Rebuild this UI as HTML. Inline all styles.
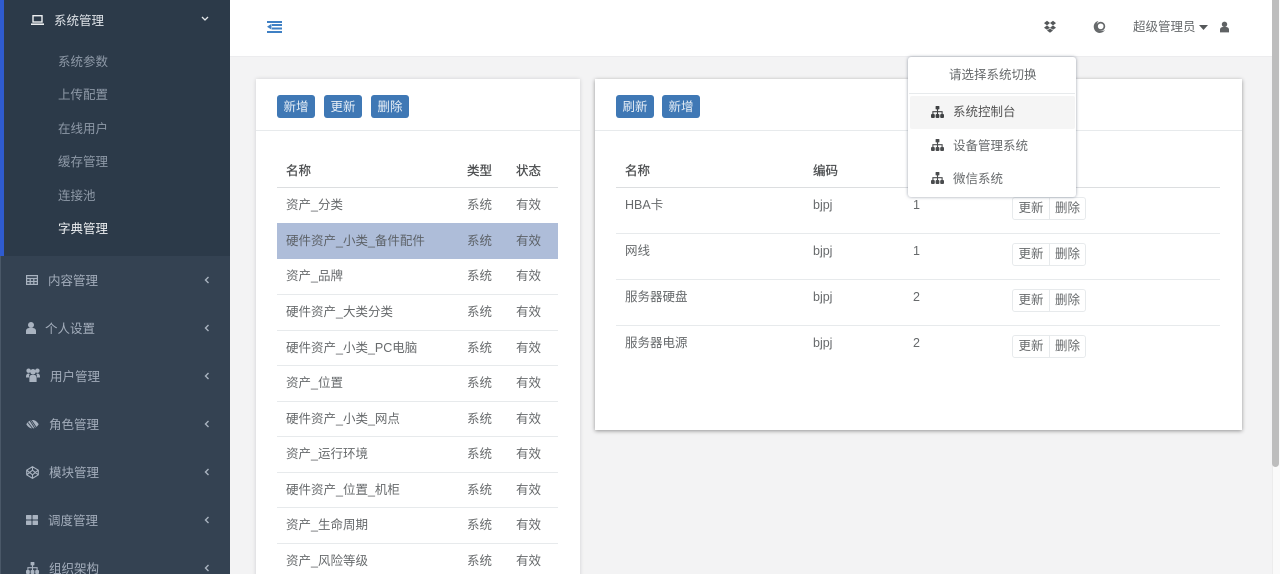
<!DOCTYPE html>
<html lang="zh"><head><meta charset="utf-8"><title>系统管理</title>
<style>
*{box-sizing:border-box}
html,body{margin:0;padding:0;width:1280px;height:574px;overflow:hidden;background:#f3f3f4}
body{position:relative;font-family:"Liberation Sans","Noto Sans CJK SC",sans-serif;font-size:12.5px;color:#676a6c}
.a{position:absolute}
.t{position:absolute;line-height:20px;height:20px;white-space:nowrap}
.ln{position:absolute;height:1px;background:#e7eaec}
.hd{color:#4a4c4e;-webkit-text-stroke:.25px #4a4c4e}
.s1{color:#a3adbb}
.s2{color:#8e99a7}
.btn{position:absolute;top:95px;height:23px;width:38px;background:#3f78b5;border-radius:3px;color:#e6eef6;text-align:center;line-height:24px}
.grp{position:absolute;left:1012px;width:74px;height:23px;border:1px solid #e7eaec;border-radius:3px;background:#fff;color:#676a6c;line-height:21px}
.grp span{position:absolute;top:0;text-align:center}
.grp .l{left:0;width:37px;border-right:1px solid #e7eaec;height:21px}
.grp .r{left:37px;width:35px}
svg{position:absolute;display:block}
.ar{position:absolute;left:204px;width:6px;height:8px}
</style></head><body>

<!-- top bar -->
<div class="a" style="left:230px;top:0;width:1042px;height:57px;background:#fff;border-bottom:1px solid #ececee"></div>

<!-- sidebar -->
<div class="a" style="left:0;top:0;width:230px;height:574px;background:#344252"></div>
<div class="a" style="left:0;top:0;width:230px;height:256px;background:#2c3a49"></div>
<div class="a" style="left:0;top:0;width:4px;height:256px;background:#2f5bcf"></div>
<div class="a" style="left:0;top:256px;width:1px;height:318px;background:#4a5868"></div>

<svg style="left:31px;top:15px" width="13" height="10" viewBox="0 0 13 10"><rect x="2" y=".7" width="9" height="6.300" fill="none" stroke="#eceef0" stroke-width="1.400"/><rect x="0" y="8.400" width="13" height="1.600" fill="#eceef0"/></svg>
<div class="t" style="left:54px;top:11px;color:#dfe3e8">系统管理</div>
<svg style="left:201px;top:16px" width="8" height="6" viewBox="0 0 8 6"><path d="M1 1l3 3 3-3" fill="none" stroke="#e4e7ea" stroke-width="1.300"/></svg>

<div class="t s2" style="left:58px;top:52px">系统参数</div>
<div class="t s2" style="left:58px;top:85px">上传配置</div>
<div class="t s2" style="left:58px;top:119px">在线用户</div>
<div class="t s2" style="left:58px;top:152px">缓存管理</div>
<div class="t s2" style="left:58px;top:186px">连接池</div>
<div class="t" style="left:58px;top:219px;color:#eef0f2">字典管理</div>

<svg style="left:26px;top:275px" width="12" height="10" viewBox="0 0 12 10"><path d="M.6.6h10.800v8.800H.6zM.6 3.500h10.800M.6 6.500h10.800M4.200 3.500v6M7.800 3.500v6" fill="none" stroke="#a9b3c0" stroke-width="1.200"/></svg>
<div class="t s1" style="left:48px;top:271px">内容管理</div>
<svg style="left:26px;top:322px" width="10" height="12" viewBox="0 0 10 12"><circle cx="5" cy="3" r="3" fill="#a9b3c0"/><path d="M0 12V9C0 7.200 1.400 6.200 3 6h4c1.600.2 3 1.200 3 3v3z" fill="#a9b3c0"/></svg>
<div class="t s1" style="left:45px;top:319px">个人设置</div>
<svg style="left:26px;top:368px" width="14" height="14" viewBox="0 0 14 14"><circle cx="2.600" cy="2.700" r="2.200" fill="#a9b3c0"/><circle cx="11.400" cy="2.700" r="2.200" fill="#a9b3c0"/><circle cx="7" cy="3.800" r="2.800" fill="#a9b3c0"/><path d="M0 9C0 6.500 1 5.500 2.600 5.500l1.200.5C3 7.200 3 8.400 3 9.500H0zM14 9c0-2.500-1-3.500-2.600-3.500l-1.200.5c.8 1.200.8 2.400.8 3.500h3zM3.400 14V9.700C3.400 8 4.500 7 5.500 7h3c1 0 2.100 1 2.100 2.700V14z" fill="#a9b3c0"/></svg>
<div class="t s1" style="left:50px;top:367px">用户管理</div>
<svg style="left:26px;top:418px" width="13" height="12" viewBox="0 0 13 12"><path d="M.3 6.200C2.300 3 4.400 2 6.500 2s4.200 1 6.200 4.200c-2 3.200-4.100 4.200-6.200 4.200S2.300 9.400.3 6.200z" fill="#a9b3c0"/><path d="M3.200 1.200l6.300 10M5.300 2l5 7.500M2 4.500l5 6.500" stroke="#344252" stroke-width=".9"/></svg>
<div class="t s1" style="left:49px;top:415px">角色管理</div>
<svg style="left:26px;top:466px" width="13" height="13" viewBox="0 0 13 13"><path d="M6.500.7l5.800 3.500v4.600l-5.800 3.500L.7 8.800V4.200zM.7 4.200l5.800 4.600 5.800-4.600M.7 8.800l5.800-4.600 5.800 4.600M6.500.7v3.500M6.500 8.800v3.500" fill="none" stroke="#a9b3c0" stroke-width="1.100"/></svg>
<div class="t s1" style="left:49px;top:463px">模块管理</div>
<svg style="left:26px;top:515px" width="12" height="10" viewBox="0 0 12 10"><rect width="5.500" height="4.500" rx=".6" fill="#a9b3c0"/><rect x="6.500" width="5.500" height="4.500" rx=".6" fill="#a9b3c0"/><rect y="5.500" width="5.500" height="4.500" rx=".6" fill="#a9b3c0"/><rect x="6.500" y="5.500" width="5.500" height="4.500" rx=".6" fill="#a9b3c0"/></svg>
<div class="t s1" style="left:48px;top:511px">调度管理</div>
<svg style="left:26px;top:562px" width="13" height="12" viewBox="0 0 13 12"><rect x="4.600" y="0" width="3.800" height="3.400" rx=".5" fill="#a9b3c0"/><rect x="0" y="8" width="3.800" height="4" rx="1" fill="#a9b3c0"/><rect x="4.600" y="8" width="3.800" height="4" rx="1" fill="#a9b3c0"/><rect x="9.200" y="8" width="3.800" height="4" rx="1" fill="#a9b3c0"/><path d="M6.500 3v5M1.900 8V5.700h9.200V8" fill="none" stroke="#a9b3c0" stroke-width="1.100"/></svg>
<div class="t s1" style="left:49px;top:559px">组织架构</div>

<svg class="ar" style="top:276px" viewBox="0 0 6 8"><path d="M4.500 1L1.500 4l3 3" fill="none" stroke="#a9b3c0" stroke-width="1.400"/></svg>
<svg class="ar" style="top:324px" viewBox="0 0 6 8"><path d="M4.500 1L1.500 4l3 3" fill="none" stroke="#a9b3c0" stroke-width="1.400"/></svg>
<svg class="ar" style="top:372px" viewBox="0 0 6 8"><path d="M4.500 1L1.500 4l3 3" fill="none" stroke="#a9b3c0" stroke-width="1.400"/></svg>
<svg class="ar" style="top:420px" viewBox="0 0 6 8"><path d="M4.500 1L1.500 4l3 3" fill="none" stroke="#a9b3c0" stroke-width="1.400"/></svg>
<svg class="ar" style="top:468px" viewBox="0 0 6 8"><path d="M4.500 1L1.500 4l3 3" fill="none" stroke="#a9b3c0" stroke-width="1.400"/></svg>
<svg class="ar" style="top:516px" viewBox="0 0 6 8"><path d="M4.500 1L1.500 4l3 3" fill="none" stroke="#a9b3c0" stroke-width="1.400"/></svg>
<svg class="ar" style="top:564px" viewBox="0 0 6 8"><path d="M4.500 1L1.500 4l3 3" fill="none" stroke="#a9b3c0" stroke-width="1.400"/></svg>

<!-- top bar icons -->
<svg style="left:267px;top:21px" width="15" height="12" viewBox="0 0 15 12"><path d="M0 0h15v2H0zM5 3h10v2H5zM5 6.500h10v2H5zM0 10h15v2H0z" fill="#3f80c4"/><path d="M4.500 2.800v5.800L0 5.700z" fill="#3f80c4"/></svg>
<svg style="left:1044px;top:20px" width="12" height="13" viewBox="0 0 12 13"><path d="M3 .8L6 3 9 .8l3 2.300-3 2.300 3 2.300-3 2.100-3-2.100-3 2.100-3-2.100 3-2.300-3-2.300zM6 3L3 5.400 6 7.700l3-2.300zM3 10.500l3-2 3 2L6 12.700z" fill="#55585a" fill-rule="evenodd"/></svg>
<svg style="left:1093px;top:20px" width="13" height="14" viewBox="0 0 13 14"><circle cx="7.700" cy="6.300" r="3.700" fill="none" stroke="#66696b" stroke-width="1.700"/><path d="M5.500 1C2.300 1.500.4 4.200.8 7.500c.4 3.300 3.200 5.800 6.600 5.400 2.300-.3 3.700-1.300 4.600-3-2.600 1.800-6 1.500-7.600-1.300C3 6 3.500 3 5.500 1z" fill="#66696b"/></svg>
<div class="t" style="left:1133px;top:17px">超级管理员</div>
<svg style="left:1199px;top:25px" width="9" height="5" viewBox="0 0 9 5"><path d="M0 0h9L4.500 5z" fill="#55585a"/></svg>
<svg style="left:1220px;top:21px" width="9" height="12" viewBox="0 0 10 12"><circle cx="5" cy="3" r="3" fill="#5f6264"/><path d="M0 12V9C0 7.200 1.400 6.200 3 6h4c1.600.2 3 1.200 3 3v3z" fill="#5f6264"/></svg>

<!-- left card -->
<div class="a" style="left:256px;top:79px;width:324px;height:500px;background:#fff;box-shadow:0 0 4px rgba(0,0,0,.14)"></div>
<div class="ln" style="left:256px;top:130px;width:324px"></div>
<div class="btn" style="left:277px">新增</div>
<div class="btn" style="left:324px">更新</div>
<div class="btn" style="left:371px">删除</div>

<div class="t hd" style="left:286px;top:161px">名称</div>
<div class="t hd" style="left:467px;top:161px">类型</div>
<div class="t hd" style="left:516px;top:161px">状态</div>
<div class="ln" style="left:277px;top:187px;width:281px;background:#dcdee0"></div>

<div class="a" style="left:277px;top:223px;width:281px;height:36px;background:#aebdd9"></div>
<div class="ln" style="left:277px;top:294px;width:281px"></div>
<div class="ln" style="left:277px;top:330px;width:281px"></div>
<div class="ln" style="left:277px;top:365px;width:281px"></div>
<div class="ln" style="left:277px;top:401px;width:281px"></div>
<div class="ln" style="left:277px;top:436px;width:281px"></div>
<div class="ln" style="left:277px;top:472px;width:281px"></div>
<div class="ln" style="left:277px;top:507px;width:281px"></div>
<div class="ln" style="left:277px;top:543px;width:281px"></div>

<div class="t" style="left:286px;top:195px">资产_分类</div><div class="t" style="left:467px;top:195px">系统</div><div class="t" style="left:516px;top:195px">有效</div>
<div class="t" style="left:286px;top:231px;color:#5d6268">硬件资产_小类_备件配件</div><div class="t" style="left:467px;top:231px;color:#5d6268">系统</div><div class="t" style="left:516px;top:231px;color:#5d6268">有效</div>
<div class="t" style="left:286px;top:266px">资产_品牌</div><div class="t" style="left:467px;top:266px">系统</div><div class="t" style="left:516px;top:266px">有效</div>
<div class="t" style="left:286px;top:302px">硬件资产_大类分类</div><div class="t" style="left:467px;top:302px">系统</div><div class="t" style="left:516px;top:302px">有效</div>
<div class="t" style="left:286px;top:338px">硬件资产_小类_PC电脑</div><div class="t" style="left:467px;top:338px">系统</div><div class="t" style="left:516px;top:338px">有效</div>
<div class="t" style="left:286px;top:373px">资产_位置</div><div class="t" style="left:467px;top:373px">系统</div><div class="t" style="left:516px;top:373px">有效</div>
<div class="t" style="left:286px;top:409px">硬件资产_小类_网点</div><div class="t" style="left:467px;top:409px">系统</div><div class="t" style="left:516px;top:409px">有效</div>
<div class="t" style="left:286px;top:444px">资产_运行环境</div><div class="t" style="left:467px;top:444px">系统</div><div class="t" style="left:516px;top:444px">有效</div>
<div class="t" style="left:286px;top:480px">硬件资产_位置_机柜</div><div class="t" style="left:467px;top:480px">系统</div><div class="t" style="left:516px;top:480px">有效</div>
<div class="t" style="left:286px;top:515px">资产_生命周期</div><div class="t" style="left:467px;top:515px">系统</div><div class="t" style="left:516px;top:515px">有效</div>
<div class="t" style="left:286px;top:551px">资产_风险等级</div><div class="t" style="left:467px;top:551px">系统</div><div class="t" style="left:516px;top:551px">有效</div>

<!-- right card -->
<div class="a" style="left:595px;top:79px;width:647px;height:351px;background:#fff;box-shadow:0 1px 4px rgba(0,0,0,.4)"></div>
<div class="ln" style="left:595px;top:130px;width:647px"></div>
<div class="btn" style="left:616px">刷新</div>
<div class="btn" style="left:662px">新增</div>

<div class="t hd" style="left:625px;top:161px">名称</div>
<div class="t hd" style="left:813px;top:161px">编码</div>
<div class="ln" style="left:616px;top:187px;width:604px;background:#dcdee0"></div>
<div class="ln" style="left:616px;top:233px;width:604px"></div>
<div class="ln" style="left:616px;top:279px;width:604px"></div>
<div class="ln" style="left:616px;top:325px;width:604px"></div>

<div class="t" style="left:625px;top:195px">HBA卡</div><div class="t" style="left:813px;top:195px">bjpj</div><div class="t" style="left:913px;top:195px">1</div>
<div class="t" style="left:625px;top:241px">网线</div><div class="t" style="left:813px;top:241px">bjpj</div><div class="t" style="left:913px;top:241px">1</div>
<div class="t" style="left:625px;top:287px">服务器硬盘</div><div class="t" style="left:813px;top:287px">bjpj</div><div class="t" style="left:913px;top:287px">2</div>
<div class="t" style="left:625px;top:333px">服务器电源</div><div class="t" style="left:813px;top:333px">bjpj</div><div class="t" style="left:913px;top:333px">2</div>

<div class="grp" style="top:197px"><span class="l">更新</span><span class="r">删除</span></div>
<div class="grp" style="top:243px"><span class="l">更新</span><span class="r">删除</span></div>
<div class="grp" style="top:289px"><span class="l">更新</span><span class="r">删除</span></div>
<div class="grp" style="top:335px"><span class="l">更新</span><span class="r">删除</span></div>

<!-- dropdown -->
<div class="a" style="left:908px;top:57px;width:168px;height:140px;background:#fff;border-radius:3px;box-shadow:0 0 3px rgba(86,96,117,.6)"></div>
<div class="t" style="left:949px;top:65px">请选择系统切换</div>
<div class="ln" style="left:909px;top:93px;width:166px"></div>
<div class="a" style="left:910px;top:96px;width:165px;height:33px;background:#f5f5f5;border-radius:2px"></div>
<svg style="left:931px;top:106px" width="13" height="12" viewBox="0 0 13 12"><rect x="4.600" y="0" width="3.800" height="3.400" rx=".5" fill="#3f4143"/><rect x="0" y="8" width="3.800" height="4" rx="1" fill="#3f4143"/><rect x="4.600" y="8" width="3.800" height="4" rx="1" fill="#3f4143"/><rect x="9.200" y="8" width="3.800" height="4" rx="1" fill="#3f4143"/><path d="M6.500 3v5M1.900 8V5.700h9.200V8" fill="none" stroke="#3f4143" stroke-width="1.100"/></svg>
<svg style="left:931px;top:139px" width="13" height="12" viewBox="0 0 13 12"><rect x="4.600" y="0" width="3.800" height="3.400" rx=".5" fill="#4a4c4e"/><rect x="0" y="8" width="3.800" height="4" rx="1" fill="#4a4c4e"/><rect x="4.600" y="8" width="3.800" height="4" rx="1" fill="#4a4c4e"/><rect x="9.200" y="8" width="3.800" height="4" rx="1" fill="#4a4c4e"/><path d="M6.500 3v5M1.900 8V5.700h9.200V8" fill="none" stroke="#4a4c4e" stroke-width="1.100"/></svg>
<svg style="left:931px;top:172px" width="13" height="12" viewBox="0 0 13 12"><rect x="4.600" y="0" width="3.800" height="3.400" rx=".5" fill="#4a4c4e"/><rect x="0" y="8" width="3.800" height="4" rx="1" fill="#4a4c4e"/><rect x="4.600" y="8" width="3.800" height="4" rx="1" fill="#4a4c4e"/><rect x="9.200" y="8" width="3.800" height="4" rx="1" fill="#4a4c4e"/><path d="M6.500 3v5M1.900 8V5.700h9.200V8" fill="none" stroke="#4a4c4e" stroke-width="1.100"/></svg>
<div class="t" style="left:953px;top:102px;color:#555">系统控制台</div>
<div class="t" style="left:953px;top:136px">设备管理系统</div>
<div class="t" style="left:953px;top:169px">微信系统</div>

<!-- scrollbar -->
<div class="a" style="left:1272px;top:0;width:8px;height:574px;background:#fafafa;border-left:1px solid #ececec"></div>
<div class="a" style="left:1272px;top:0;width:7px;height:467px;background:#bdbdbd;border-radius:0 0 4px 4px"></div>
</body></html>
